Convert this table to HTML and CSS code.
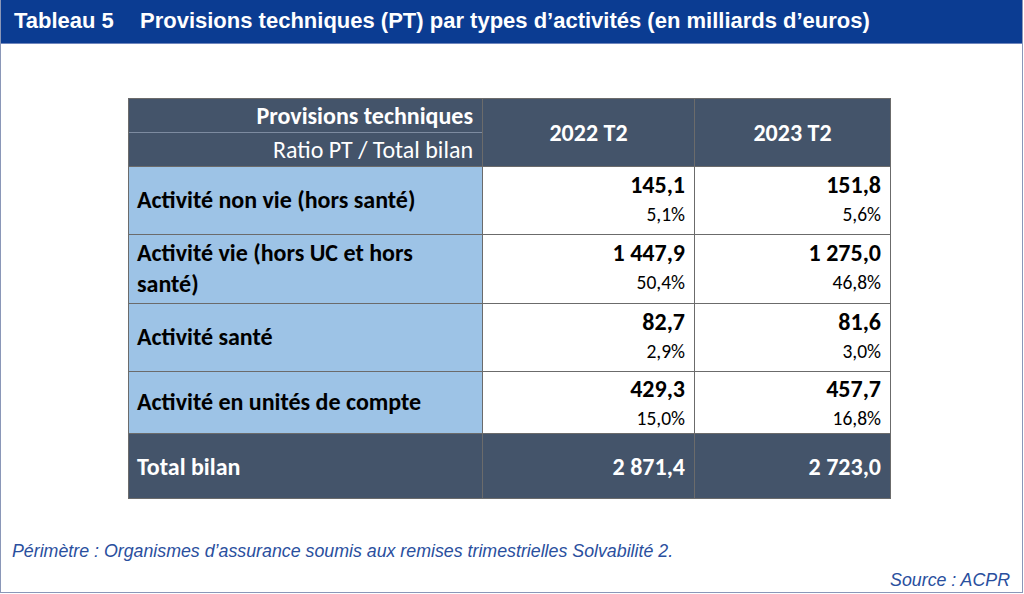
FILE: index.html
```html
<!DOCTYPE html>
<html lang="fr">
<head>
<meta charset="utf-8">
<title>Tableau 5</title>
<link rel="stylesheet" href="styles.css">
</head>
<body>
<div class="frame">
  <div class="titlebar">
    <span class="tnum">Tableau 5</span>
    <span class="ttext">Provisions techniques (PT) par types d’activités (en milliards d’euros)</span>
  </div>
  <div class="content">
    <table class="pt">
      <colgroup>
        <col class="c1"><col class="c2"><col class="c3">
      </colgroup>
      <thead>
        <tr class="hrow">
          <th class="hlabel">
            <div class="hl1">Provisions techniques</div>
            <div class="hl2">Ratio PT / Total bilan</div>
          </th>
          <th class="hyear">2022 T2</th>
          <th class="hyear">2023 T2</th>
        </tr>
      </thead>
      <tbody>
        <tr class="r1">
          <td class="lab">Activité non vie (hors santé)</td>
          <td class="val"><div class="v">145,1</div><div class="p">5,1%</div></td>
          <td class="val"><div class="v">151,8</div><div class="p">5,6%</div></td>
        </tr>
        <tr class="r2">
          <td class="lab">Activité vie (hors UC et hors santé)</td>
          <td class="val"><div class="v">1 447,9</div><div class="p">50,4%</div></td>
          <td class="val"><div class="v">1 275,0</div><div class="p">46,8%</div></td>
        </tr>
        <tr class="r3">
          <td class="lab">Activité santé</td>
          <td class="val"><div class="v">82,7</div><div class="p">2,9%</div></td>
          <td class="val"><div class="v">81,6</div><div class="p">3,0%</div></td>
        </tr>
        <tr class="r4">
          <td class="lab">Activité en unités de compte</td>
          <td class="val"><div class="v">429,3</div><div class="p">15,0%</div></td>
          <td class="val"><div class="v">457,7</div><div class="p">16,8%</div></td>
        </tr>
        <tr class="rtot">
          <td class="tlab">Total bilan</td>
          <td class="tval">2 871,4</td>
          <td class="tval">2 723,0</td>
        </tr>
      </tbody>
    </table>
  </div>
  <div class="notes">
    <p class="perim">Périmètre : Organismes d’assurance soumis aux remises trimestrielles Solvabilité 2.</p>
    <p class="source">Source : ACPR</p>
  </div>
</div>
</body>
</html>
```
FILE: styles.css
```css
* { box-sizing: border-box; }
html, body { margin: 0; padding: 0; background: #ffffff; }
body { width: 1024px; height: 594px; overflow: hidden; }

.frame {
  width: 1023px;
  height: 593px;
  border: 1px solid #8a97b8;
  border-top: none;
  display: flex;
  flex-direction: column;
  background: #ffffff;
}

.titlebar {
  height: 44px;
  flex: none;
  background: #0b3c92;
  border-bottom: 1px solid #6f86bd;
  color: #ffffff;
  font-family: "Liberation Sans", Arial, sans-serif;
  font-weight: bold;
  font-size: 22px;
  display: flex;
  align-items: center;
  padding-left: 13px;
  padding-bottom: 2px;
  white-space: nowrap;
}
.tnum { width: 126px; }

.content {
  padding-top: 54px;
  padding-left: 127px;
}

.pt {
  border-collapse: collapse;
  font-family: "Carlito", "Lato", "Open Sans", sans-serif;
  color: #000000;
  table-layout: fixed;
  width: 762px;
}
.c1 { width: 354px; }
.c2 { width: 212px; }
.c3 { width: 196px; }

.pt th, .pt td {
  border: 1.5px solid #6b6b6b;
  padding: 0;
}

.hrow { height: 68px; }
.hrow th { background: #44546a; color: #ffffff; }
.hlabel { text-align: right; font-size: 24px; }
.hl1 {
  height: 34px;
  line-height: 34px;
  padding-right: 9px;
  font-weight: bold;
  border-bottom: 1px solid #7d8ba0;
}
.hl2 {
  height: 33px;
  line-height: 33px;
  padding-right: 9px;
  font-weight: normal;
}
.hyear { font-size: 24px; font-weight: bold; text-align: center; }

.r1 { height: 68px; }
.r2 { height: 69px; }
.r3 { height: 68px; }
.r4 { height: 62px; }
.rtot { height: 65px; }

.lab {
  background: #9dc3e6;
  font-weight: bold;
  font-size: 24px;
  line-height: 31px;
  padding: 0 10px 2px 8px !important;
  vertical-align: middle;
}

.val {
  background: #ffffff;
  vertical-align: top;
  text-align: right;
  padding-right: 9px !important;
}
.v {
  font-size: 24px;
  font-weight: bold;
  line-height: 30px;
  padding-top: 3px;
}
.p {
  font-size: 19.5px;
  line-height: 28px;
}
.r4 .v { padding-top: 2px; }
.r4 .p { line-height: 29px; }

.rtot td { background: #44546a; color: #ffffff; font-size: 24px; font-weight: bold; }
.tlab { padding-left: 8px !important; }
.tval { text-align: right; padding-right: 9px !important; }

.notes {
  font-family: "Liberation Sans", Arial, sans-serif;
  font-style: italic;
  font-size: 17.8px;
  color: #2a4f9e;
  padding: 41px 12px 0 11px;
}
.notes p { margin: 0; }
.perim { line-height: 22px; }
.source { text-align: right; line-height: 22px; margin-top: 7px !important; }
```
